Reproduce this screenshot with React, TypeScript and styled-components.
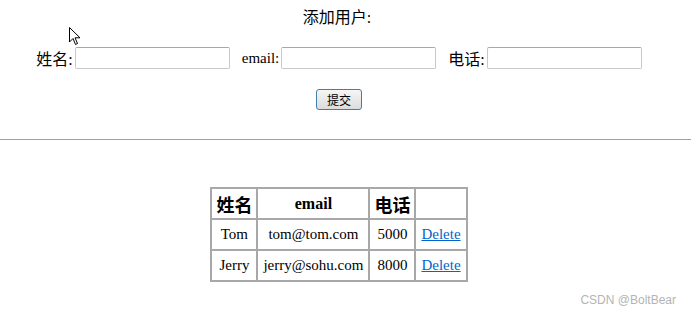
import React from "react";
import styled, { createGlobalStyle } from "styled-components";

const Global = createGlobalStyle`
  html, body { margin: 0; padding: 0; background: #fff; }
  body { font-family: "Liberation Serif", "Noto Sans CJK SC", serif; font-size: 16px; color: #000; }
`;

const Page = styled.div`
  position: relative;
  width: 691px;
  height: 314px;
  overflow: hidden;
`;

const Form = styled.div`
  display: flex;
  flex-direction: column;
  align-items: center;
  padding-top: 8px;
  padding-right: 13px;
`;

const Title = styled.div`
  height: 20px;
  line-height: 20px;
  margin-right: 4px;
`;

const FieldRow = styled.div`
  display: flex;
  align-items: center;
  gap: 12px;
  margin-top: 18px;
  height: 24px;
`;

const Field = styled.label`
  display: flex;
  align-items: center;
`;

const Label = styled.span<{ $latin?: boolean }>`
  font-size: ${(p) => (p.$latin ? "15px" : "16px")};
`;

const Input = styled.input`
  width: 155px;
  height: 22px;
  box-sizing: border-box;
  margin-left: 2px;
  border: 1px solid #c8c8c8;
  border-top-color: #a8a8a8;
  border-radius: 2px;
  padding: 0 2px;
  background: #fff;
`;

const Submit = styled.button`
  margin-top: 19px;
  width: 46px;
  height: 21px;
  padding: 0;
  font-family: "Noto Sans CJK SC", sans-serif;
  font-size: 12px;
  line-height: 18px;
  border: 1px solid #3c7fb1;
  border-radius: 3px;
  background: linear-gradient(#f6f6f6, #dcdcdc);
  color: #000;
`;

const Rule = styled.hr`
  margin: 29px 0 0;
  border: 0;
  border-top: 1px solid #a0a0a0;
`;

const TableWrap = styled.div`
  display: flex;
  justify-content: center;
  margin-top: 47px;
  padding-right: 13px;
`;

const Table = styled.table`
  border-collapse: separate;
  border-spacing: 0;
  border: 1px solid #a8a8a8;
`;

const Th = styled.th<{ $cjk?: boolean }>`
  border: 1px solid #a8a8a8;
  height: 29px;
  padding: 0 4px;
  font-size: ${(p) => (p.$cjk ? "18px" : "16px")};
  font-weight: bold;
`;

const Td = styled.td`
  border: 1px solid #a8a8a8;
  height: 29px;
  padding: 0 5px;
  text-align: center;
  font-size: 15px;
`;

const Link = styled.a`
  color: #0066cc;
  text-decoration: underline;
`;

const Watermark = styled.div`
  position: absolute;
  right: 15px;
  bottom: 7px;
  font-family: "Liberation Sans", Arial, sans-serif;
  font-size: 12px;
  color: #b4b4b4;
`;

const Cursor = styled.svg`
  position: absolute;
  left: 69px;
  top: 27px;
`;

const users = [
  { name: "Tom", email: "tom@tom.com", tel: "5000" },
  { name: "Jerry", email: "jerry@sohu.com", tel: "8000" },
];

export default function App() {
  return (
    <Page>
      <Global />
      <Form>
        <Title>添加用户:</Title>
        <FieldRow>
          <Field>
            <Label>姓名:</Label>
            <Input />
          </Field>
          <Field>
            <Label $latin>email:</Label>
            <Input />
          </Field>
          <Field>
            <Label>电话:</Label>
            <Input />
          </Field>
        </FieldRow>
        <Submit>提交</Submit>
      </Form>
      <Rule />
      <TableWrap>
        <Table>
          <thead>
            <tr>
              <Th $cjk>姓名</Th>
              <Th>email</Th>
              <Th $cjk>电话</Th>
              <Th></Th>
            </tr>
          </thead>
          <tbody>
            {users.map((u) => (
              <tr key={u.name}>
                <Td>{u.name}</Td>
                <Td>{u.email}</Td>
                <Td>{u.tel}</Td>
                <Td>
                  <Link href="#">Delete</Link>
                </Td>
              </tr>
            ))}
          </tbody>
        </Table>
      </TableWrap>
      <Watermark>CSDN @BoltBear</Watermark>
      <Cursor width="12" height="19" viewBox="0 0 12 19">
        <path d="M0.5 0.5 L0.5 15 L4 11.5 L6.5 17.5 L8.5 16.5 L6 10.8 L11 10.8 Z" fill="#fff" stroke="#000" strokeWidth="1" />
      </Cursor>
    </Page>
  );
}
